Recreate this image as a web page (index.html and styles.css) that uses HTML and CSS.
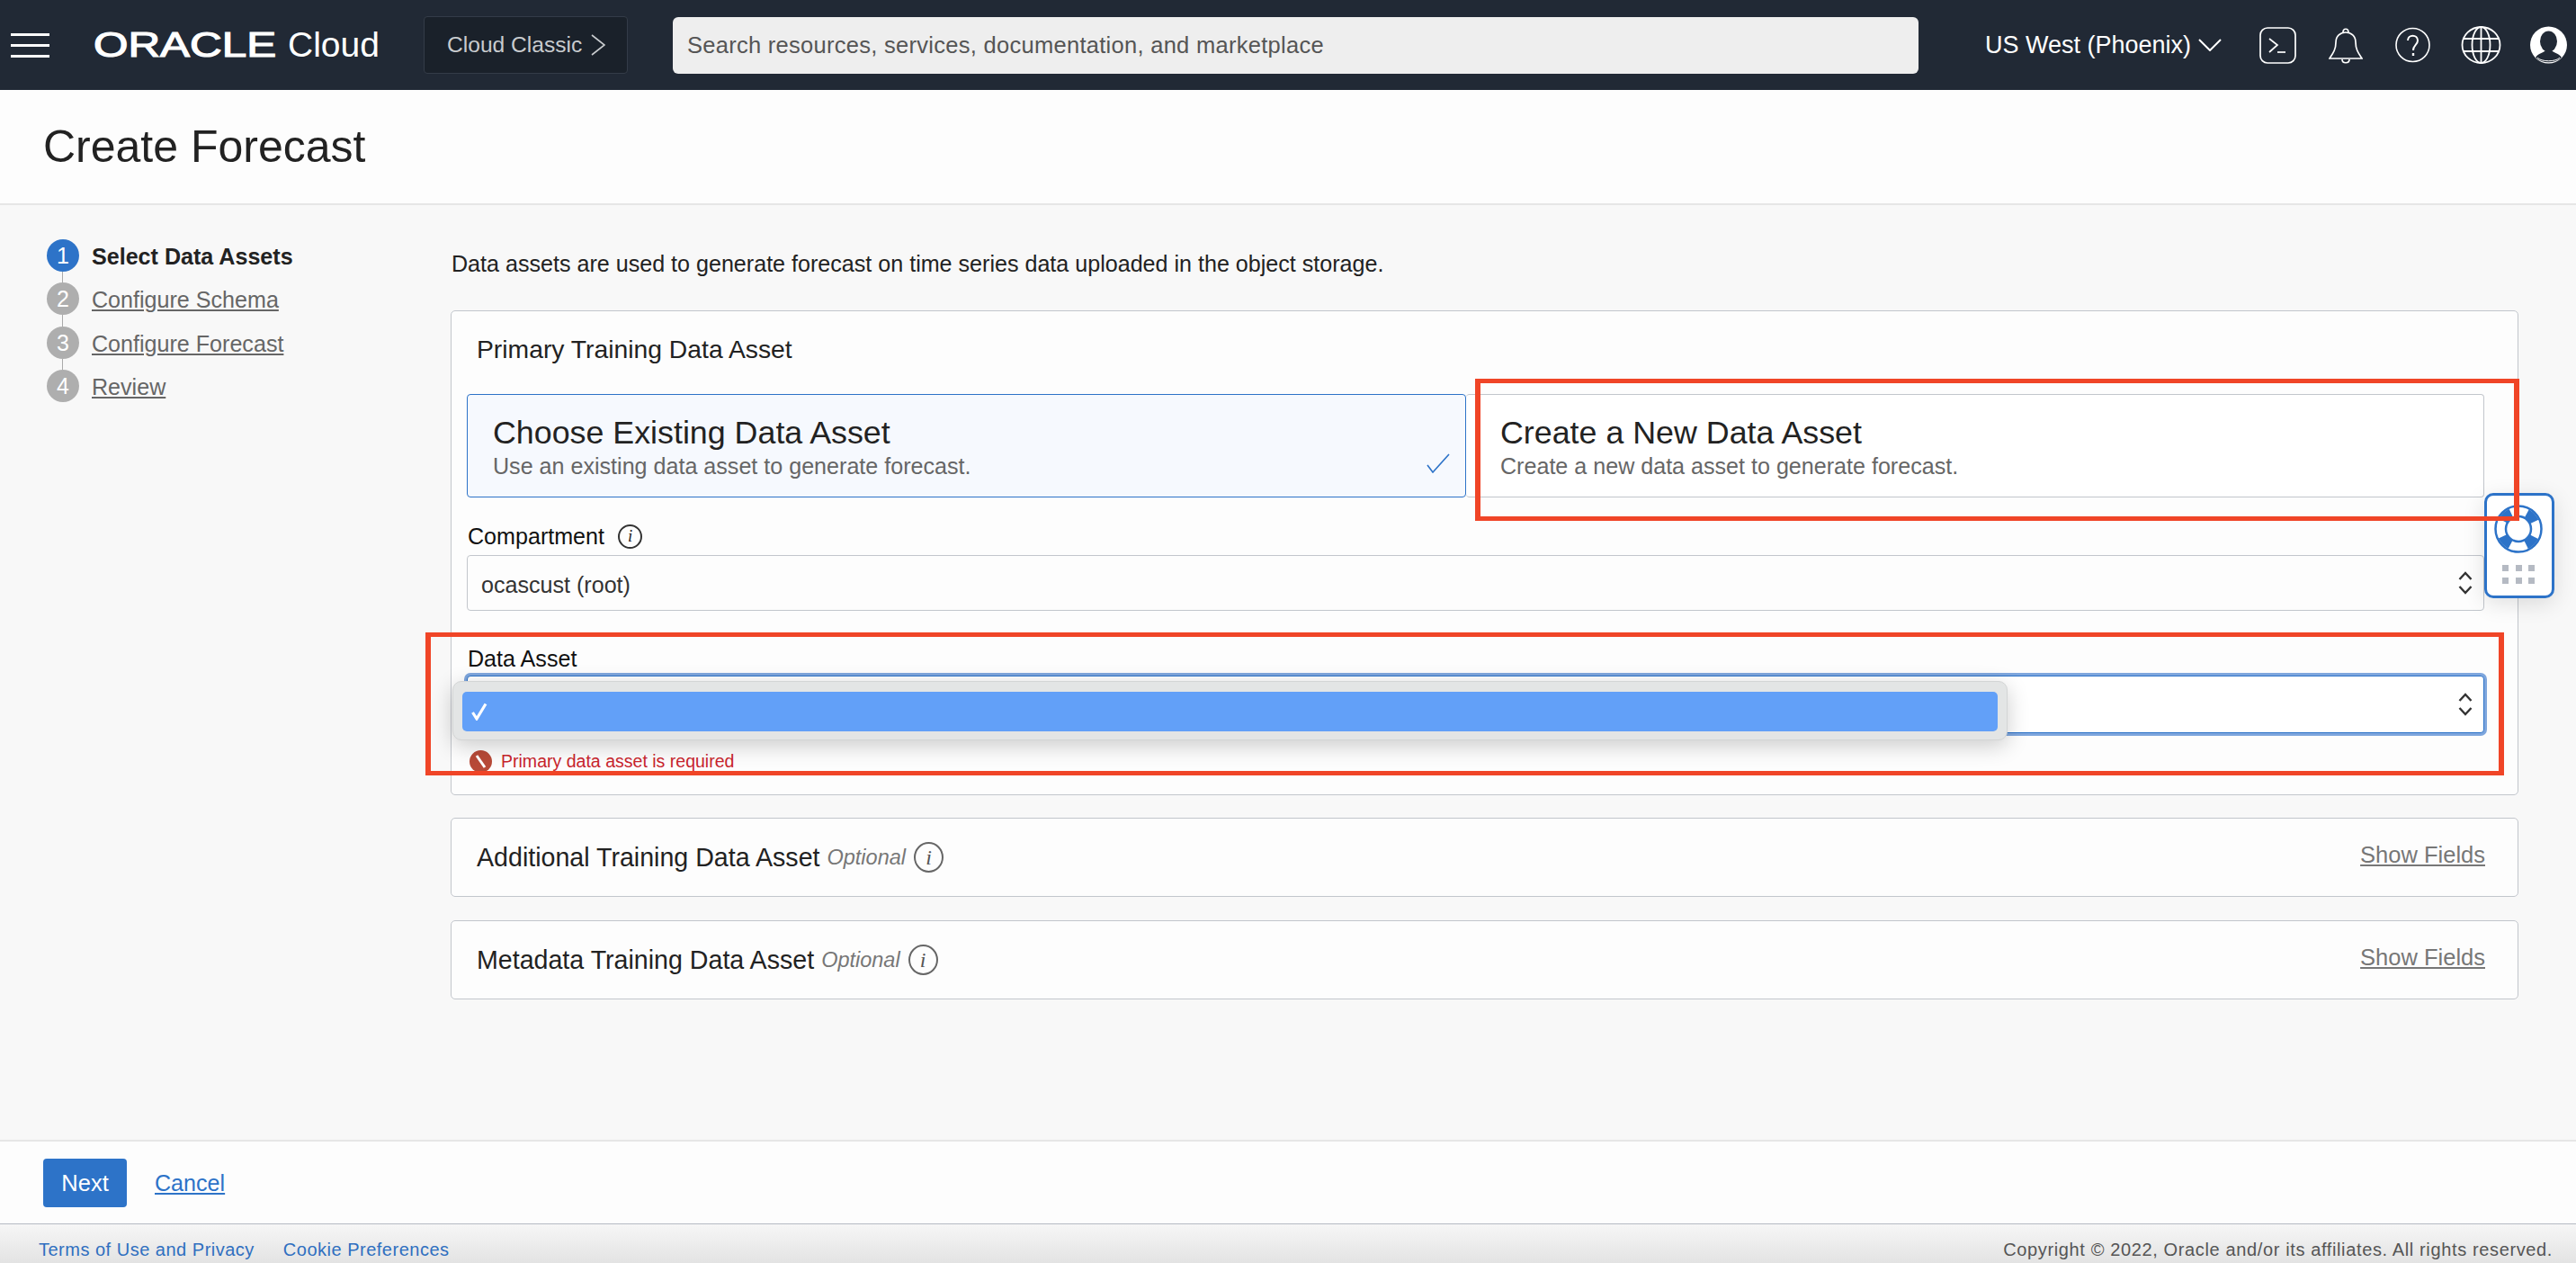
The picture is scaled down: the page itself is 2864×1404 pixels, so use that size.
FILE: index.html
```html
<!DOCTYPE html>
<html lang="en">
<head>
  <meta charset="UTF-8">
  <meta name="viewport" content="width=device-width, initial-scale=1.0">
  <title>Create Forecast</title>
  <link rel="stylesheet" href="styles.css">
</head>
<body>
<div class="page">

  <!-- Top bar -->
  <header class="topbar">
    <div class="hamburger"><span></span><span></span><span></span></div>
    <div class="brand"><span class="brand-oracle">ORACLE</span><span class="brand-cloud">Cloud</span></div>
    <div class="classic">Cloud Classic
      <svg width="16" height="24" viewBox="0 0 16 24"><path d="M1 1l14 11L1 23" fill="none" stroke="#c8cbce" stroke-width="1.6"/></svg>
    </div>
    <div class="search">Search resources, services, documentation, and marketplace</div>
    <div class="region">US West (Phoenix)
      <svg width="26" height="14" viewBox="0 0 26 14"><path d="M1 1l12 12L25 1" fill="none" stroke="#fff" stroke-width="2"/></svg>
    </div>
    <div class="top-icons">
      <svg class="icon-term" width="41" height="41" viewBox="0 0 41 41" fill="none" stroke="#fff" stroke-width="1.7">
        <rect x="1" y="1" width="39" height="39" rx="8"/>
        <path d="M11 13l9 7-9 8"/>
        <path d="M20 28h9"/>
      </svg>
      <svg class="icon-bell" width="38" height="42" viewBox="0 0 38 42" fill="none" stroke="#fff" stroke-width="1.7">
        <path d="M1 36c4-6 7-10 7-18 0-7 5-11 11-11s11 4 11 11c0 8 3 12 7 18z"/>
        <path d="M16 7c0-5 6-5 6 0"/>
        <path d="M15 37c0 5 8 5 8 0"/>
      </svg>
      <svg class="icon-help" width="39" height="40" viewBox="0 0 39 40" fill="none" stroke="#fff" stroke-width="1.6">
        <circle cx="19.5" cy="20" r="18.5"/>
        <path d="M14 15c0-7 11-7 11 0 0 5-5 5-5 11" stroke-width="2"/>
        <path d="M20 29v3" stroke-width="2.4"/>
      </svg>
      <svg class="icon-globe" width="45" height="42" viewBox="0 0 45 42" fill="none" stroke="#fff" stroke-width="1.8">
        <ellipse cx="22.5" cy="21" rx="21" ry="20"/>
        <ellipse cx="22.5" cy="21" rx="10" ry="20"/>
        <path d="M22.5 1v40M2 14h41M2 28h41"/>
      </svg>
      <svg class="icon-user" width="41" height="42" viewBox="0 0 41 42">
        <ellipse cx="20.5" cy="21" rx="20.5" ry="20.5" fill="#fff"/>
        <ellipse cx="20.5" cy="17" rx="9.5" ry="11.5" fill="#212935"/>
        <path d="M6 35c3-5 9-5 11-8h7c2 3 8 3 11 8-8 7-21 7-29 0z" fill="#212935"/>
        <path d="M8 35c4 5 21 5 25 0" fill="none" stroke="#fff" stroke-width="1"/>
      </svg>
    </div>
  </header>

  <div class="titlebar"><h1>Create Forecast</h1></div>

  <div class="content">
    <!-- Wizard steps -->
    <ol class="steps">
      <li class="step step-current"><span class="step-num">1</span><span class="step-label">Select Data Assets</span></li>
      <li class="step"><span class="step-num">2</span><a class="step-label">Configure Schema</a></li>
      <li class="step"><span class="step-num">3</span><a class="step-label">Configure Forecast</a></li>
      <li class="step"><span class="step-num">4</span><a class="step-label">Review</a></li>
    </ol>

    <main class="main">
      <p class="intro">Data assets are used to generate forecast on time series data uploaded in the object storage.</p>

      <section class="card">
        <h2 class="card-title">Primary Training Data Asset</h2>

        <div class="tiles">
          <div class="tile tile-selected">
            <div class="tile-title">Choose Existing Data Asset</div>
            <div class="tile-sub">Use an existing data asset to generate forecast.</div>
            <svg class="tile-check" width="26" height="22" viewBox="0 0 26 22"><path d="M1 13l6 8L25 1" fill="none" stroke="#2d73c8" stroke-width="1.6"/></svg>
          </div>
          <div class="tile tile-other">
            <div class="tile-title">Create a New Data Asset</div>
            <div class="tile-sub">Create a new data asset to generate forecast.</div>
          </div>
        </div>

        <div class="field field-compartment">
          <label class="field-label">Compartment <span class="info info-small">i</span></label>
          <div class="select select-value">ocascust (root)
            <svg class="updown" width="16" height="26" viewBox="0 0 16 26" fill="none" stroke="#333" stroke-width="2.4"><path d="M1.500 9l6.500-7 6.500 7"/><path d="M1.500 17l6.500 7 6.500-7"/></svg>
          </div>
        </div>

        <div class="field field-asset">
          <label class="field-label">Data Asset</label>
          <div class="select select-focus">
            <svg class="updown" width="16" height="26" viewBox="0 0 16 26" fill="none" stroke="#333" stroke-width="2.4"><path d="M1.500 9l6.500-7 6.500 7"/><path d="M1.500 17l6.500 7 6.500-7"/></svg>
          </div>
          <div class="popup">
            <div class="popup-row">
              <svg width="20" height="20" viewBox="0 0 20 20"><path d="M2.500 11l4.500 7L17 1.500" fill="none" stroke="#fff" stroke-width="3.200"/></svg>
            </div>
          </div>
          <div class="error">
            <svg width="25" height="25" viewBox="0 0 25 25"><circle cx="12.500" cy="12.500" r="12.500" fill="#b84a38"/><path d="M8 6l9 13" stroke="#fff" stroke-width="3"/></svg>
            Primary data asset is required
          </div>
        </div>
      </section>

      <section class="panel">
        <span class="panel-title">Additional Training Data Asset</span>
        <em class="optional">Optional</em>
        <span class="info">i</span>
        <a class="show-fields">Show Fields</a>
      </section>

      <section class="panel panel-last">
        <span class="panel-title">Metadata Training Data Asset</span>
        <em class="optional">Optional</em>
        <span class="info">i</span>
        <a class="show-fields">Show Fields</a>
      </section>
    </main>
  </div>

  <div class="actions">
    <button class="btn-next">Next</button>
    <a class="cancel">Cancel</a>
  </div>

  <footer class="footer">
    <a>Terms of Use and Privacy</a>
    <a>Cookie Preferences</a>
    <span class="copyright">Copyright © 2022, Oracle and/or its affiliates. All rights reserved.</span>
  </footer>

  <!-- Floating help widget -->
  <div class="help-widget">
    <svg width="54" height="54" viewBox="0 0 54 54" fill="none" stroke="#2d73c8">
      <circle cx="27" cy="27" r="25.500" stroke-width="2.500"/>
      <circle cx="27" cy="27" r="14" stroke-width="2.500"/>
      <circle cx="27" cy="27" r="19.500" stroke-width="10" stroke-dasharray="12.500 18.130" stroke-dashoffset="-9.050"/>
    </svg>
    <div class="help-dots"><i></i><i></i><i></i><i></i><i></i><i></i></div>
  </div>

  <!-- Red annotation boxes over the screenshot -->
  <div class="mark mark-new"></div>
  <div class="mark mark-asset"></div>
</div>
</body>
</html>
```

FILE: styles.css
```css
* {
  box-sizing: border-box;
}

html, body {
  margin: 0;
  padding: 0;
}

body {
  font-family: "Liberation Sans", Arial, sans-serif;
  font-size: 25.1px;
  color: #222;
  background-color: #f8f8f8;
}

a {
  cursor: pointer;
}

.page {
  position: relative;
  width: 2864px;
  height: 1404px;
  display: flex;
  flex-direction: column;
  overflow: hidden;
}

/* top bar */
.topbar {
  flex: none;
  height: 100px;
  display: flex;
  align-items: center;
  background-color: #212935;
  color: #fff;
}

.hamburger {
  width: 43px;
  margin-left: 12px;
  display: flex;
  flex-direction: column;
  gap: 9px;
}

.hamburger span {
  display: block;
  height: 3px;
  background-color: #fff;
}

.brand {
  width: 367px;
  margin-left: 49px;
  display: flex;
  align-items: center;
}

.brand-oracle {
  width: 216px;
  font-size: 38px;
  line-height: 40px;
  -webkit-text-stroke: 1.2px #fff;
  transform: scaleX(1.3);
  transform-origin: left center;
}

.brand-cloud {
  font-size: 39px;
  line-height: 40px;
}

.classic {
  width: 227px;
  height: 64px;
  padding-left: 25px;
  display: flex;
  align-items: center;
  gap: 10px;
  font-size: 24.6px;
  background-color: #1a212a;
  border: 1px solid #343c48;
  border-radius: 4px;
  color: #c8cbce;
  white-space: nowrap;
}

.search {
  width: 1385px;
  height: 63px;
  margin-left: 50px;
  padding-left: 16px;
  display: flex;
  align-items: center;
  background-color: #eeeeee;
  border-radius: 6px;
  font-size: 25.5px;
  letter-spacing: 0.28px;
  color: #555;
}

.region {
  margin-left: 74px;
  display: flex;
  align-items: center;
  gap: 8px;
  font-size: 27px;
  white-space: nowrap;
}

.top-icons {
  margin-left: 42px;
  display: flex;
  align-items: center;
  gap: 36px;
}

.top-icons svg {
  display: block;
}

.icon-globe {
  margin-left: -2px;
}

.icon-user {
  margin-left: -4px;
}

/* title */
.titlebar {
  flex: none;
  height: 128px;
  padding-left: 48px;
  display: flex;
  align-items: center;
  background-color: #fdfdfd;
  border-bottom: 2px solid #e6e6e6;
}

h1 {
  margin: 0;
  font-size: 50px;
  font-weight: normal;
  color: #222;
}

/* wizard steps */
.content {
  flex: 1;
  display: flex;
  min-height: 0;
}

.steps {
  width: 501px;
  margin: 0;
  padding: 38px 0 0 52px;
  list-style: none;
}

.step {
  position: relative;
  height: 48.300px;
  display: flex;
  gap: 14px;
}

.step:not(:last-child)::after {
  content: "";
  position: absolute;
  left: 17px;
  top: 36px;
  width: 1px;
  height: 13px;
  background-color: #aaa;
}

.step-num {
  width: 36px;
  height: 36px;
  border-radius: 50%;
  background-color: #aeaeae;
  color: #fff;
  line-height: 36px;
  text-align: center;
  font-size: 25px;
}

.step-current .step-num {
  background-color: #2d73c8;
}

.step-label {
  line-height: 38px;
  color: #666;
  text-decoration: underline;
  white-space: nowrap;
}

.step-current .step-label {
  font-weight: bold;
  color: #222;
  text-decoration: none;
}

/* main column */
.main {
  width: 2299px;
}

.intro {
  margin: 50px 0 0;
  height: 67px;
  line-height: 30px;
  padding-left: 1px;
  color: #222;
}

.card {
  position: relative;
  height: 539px;
  padding: 0 37px 0 17px;
  background-color: #fdfdfd;
  border: 1px solid #c2c6cc;
  border-radius: 5px;
}

.card-title {
  margin: 0;
  padding: 26px 0 0 11px;
  height: 92px;
  font-size: 28.3px;
  line-height: 32px;
  font-weight: normal;
}

.tiles {
  display: flex;
  height: 115px;
}

.tile {
  position: relative;
  padding: 21px 0 0 28px;
  border: 1px solid #c2c6cc;
  border-radius: 4px;
}

.tile-selected {
  width: 1111px;
  background-color: #f6f9fe;
  border-color: #2d73c8;
}

.tile-other {
  flex: 1;
  padding-left: 38px;
  background-color: #fff;
  border-left: none;
}

.tile-title {
  font-size: 35.800px;
  line-height: 42px;
  color: #222;
}

.tile-sub {
  line-height: 28px;
  margin-top: 2px;
  color: #666;
}

.tile-check {
  position: absolute;
  right: 17px;
  bottom: 26px;
}

.field {
  position: relative;
}

.field-label {
  display: flex;
  align-items: center;
  gap: 15px;
  height: 30px;
  padding-left: 1px;
  color: #111;
}

.field-compartment {
  margin-top: 28px;
}

.field-compartment .select {
  margin-top: 6px;
}

.field-asset {
  margin-top: 38px;
}

.select {
  position: relative;
  height: 62px;
  padding-left: 15px;
  display: flex;
  align-items: center;
  background-color: #fdfdfd;
  border: 1px solid #c2c6cc;
  border-radius: 4px;
  color: #333;
}

.select-value {
  padding-top: 5px;
}

.select-focus {
  height: 64px;
  margin-top: 4px;
  background-color: #fff;
  border-color: #2d73c8;
  box-shadow: 0 0 0 3px #7ea6dd;
}

.updown {
  position: absolute;
  right: 12px;
  top: 50%;
  margin-top: -13px;
}

.popup {
  position: absolute;
  left: -16px;
  top: 40px;
  width: 1729px;
  height: 66px;
  padding: 11px 10px;
  background-color: #e3e5e5;
  border: 1px solid #d3d5d5;
  border-radius: 10px;
  box-shadow: 0 6px 24px rgba(0, 0, 0, 0.2);
}

.popup-row {
  height: 44px;
  padding: 12px 0 0 9px;
  background-color: #62a0f8;
  border-radius: 5px;
}

.popup-row svg {
  display: block;
}

.error {
  margin-top: 18px;
  padding-left: 3px;
  display: flex;
  align-items: center;
  gap: 10px;
  height: 26px;
  font-size: 19.550px;
  color: #c9252d;
}

/* collapsed panels */
.panel {
  height: 88px;
  margin-top: 25px;
  padding: 0 36px 0 28px;
  display: flex;
  align-items: center;
  background-color: #fdfdfd;
  border: 1px solid #c2c6cc;
  border-radius: 5px;
}

.panel-last {
  margin-top: 26px;
}

.panel-title {
  font-size: 28.600px;
  color: #222;
}

.optional {
  margin-left: 8px;
  font-size: 23.500px;
  color: #777;
}

.info {
  width: 33px;
  height: 34px;
  margin-left: 9px;
  display: inline-flex;
  align-items: center;
  justify-content: center;
  border: 2px solid #666;
  border-radius: 50%;
  font-family: "Liberation Serif", serif;
  font-style: italic;
  font-size: 24px;
  color: #555;
}

.info-small {
  width: 27px;
  height: 27px;
  margin-left: 0;
  font-size: 19px;
  color: #222;
  border-color: #333;
}

.show-fields {
  margin-left: auto;
  padding-bottom: 6px;
  font-size: 25.500px;
  color: #777;
  text-decoration: underline;
}

/* bottom actions */
.actions {
  flex: none;
  height: 93px;
  padding: 19px 0 0 48px;
  display: flex;
  align-items: flex-start;
  gap: 31px;
  background-color: #fdfdfd;
  border-top: 2px solid #e6e6e6;
}

.btn-next {
  width: 93px;
  height: 54px;
  padding: 0;
  background-color: #2d73c8;
  border: none;
  border-radius: 4px;
  color: #fff;
  font-family: inherit;
  font-size: 25.500px;
}

.cancel {
  line-height: 54px;
  color: #2d73c8;
  text-decoration: underline;
}

.footer {
  flex: none;
  height: 44px;
  padding: 13px 26px 0 43px;
  display: flex;
  gap: 32px;
  line-height: 30px;
  font-size: 20px;
  letter-spacing: 0.5px;
  color: #2f6fc0;
  background: linear-gradient(#f6f6f6, #e3e3e3);
  border-top: 1px solid #b5bac3;
}

.copyright {
  margin-left: auto;
  letter-spacing: 0.63px;
  color: #555;
}

/* annotations */
.mark {
  position: absolute;
  border-style: solid;
  border-color: #f04527;
  border-width: 5px 6px;
}

.mark-new {
  left: 1640px;
  top: 421px;
  width: 1161px;
  height: 158px;
}

.mark-asset {
  left: 473px;
  top: 703px;
  width: 2311px;
  height: 159px;
}

/* help widget */
.help-widget {
  position: absolute;
  left: 2762px;
  top: 548px;
  width: 78px;
  height: 117px;
  padding: 10px 0 0 8px;
  background-color: #fff;
  border: 3px solid #2d73c8;
  border-radius: 10px;
  box-shadow: 0 6px 24px rgba(0, 0, 0, 0.12);
}

.help-widget svg {
  display: block;
}

.help-dots {
  width: 36px;
  margin: 13px 0 0 9px;
  display: grid;
  grid-template-columns: repeat(3, 7px);
  justify-content: space-between;
  row-gap: 7px;
}

.help-dots i {
  display: block;
  height: 7px;
  background-color: #b5bac3;
}
```
